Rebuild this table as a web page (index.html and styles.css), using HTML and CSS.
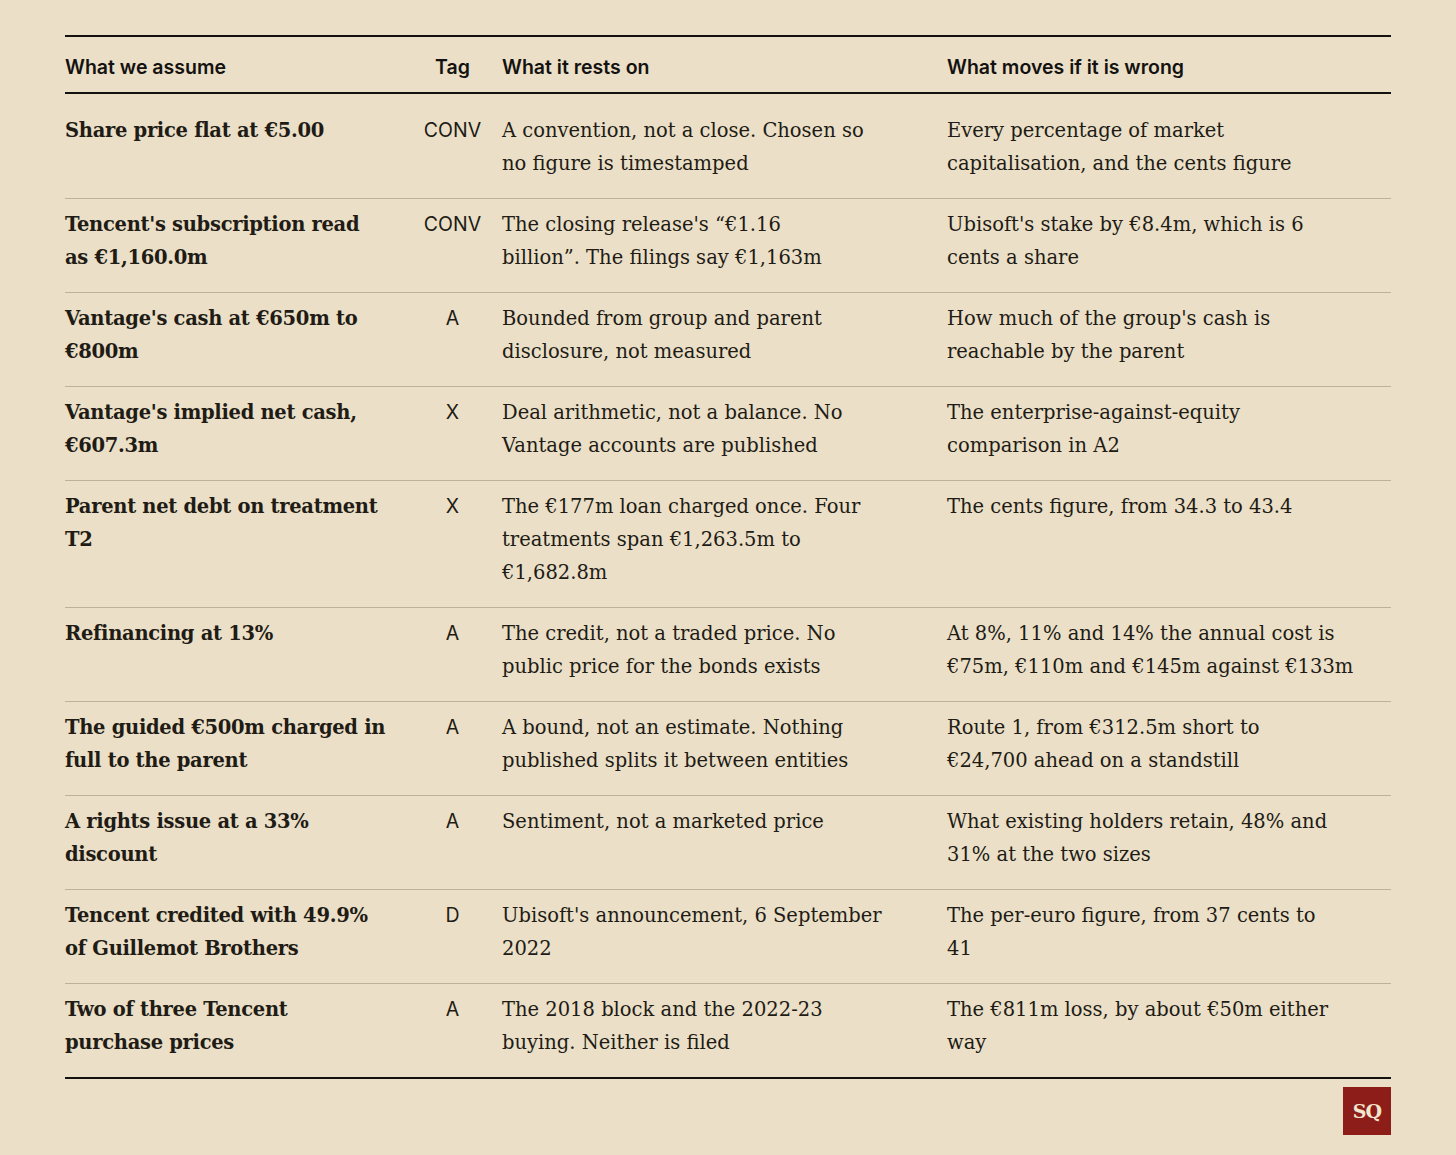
FILE: index.html
```html
<!DOCTYPE html>
<html lang="en">
<head>
<meta charset="utf-8">
<title>Assumptions</title>
<link rel="stylesheet" href="styles.css">
</head>
<body>
<main class="page">
  <table class="assumptions">
    <colgroup>
      <col class="c-assume">
      <col class="c-tag">
      <col class="c-rests">
      <col class="c-moves">
    </colgroup>
    <thead>
      <tr>
        <th class="assume">What we assume</th>
        <th class="tag">Tag</th>
        <th>What it rests on</th>
        <th>What moves if it is wrong</th>
      </tr>
    </thead>
    <tbody>
      <tr>
        <td class="assume">Share price flat at €5.00</td>
        <td class="tag">CONV</td>
        <td>A convention, not a close. Chosen so<br>no figure is timestamped</td>
        <td>Every percentage of market<br>capitalisation, and the cents figure</td>
      </tr>
      <tr>
        <td class="assume">Tencent's subscription read<br>as €1,160.0m</td>
        <td class="tag">CONV</td>
        <td>The closing release's “€1.16<br>billion”. The filings say €1,163m</td>
        <td>Ubisoft's stake by €8.4m, which is 6<br>cents a share</td>
      </tr>
      <tr>
        <td class="assume">Vantage's cash at €650m to<br>€800m</td>
        <td class="tag">A</td>
        <td>Bounded from group and parent<br>disclosure, not measured</td>
        <td>How much of the group's cash is<br>reachable by the parent</td>
      </tr>
      <tr>
        <td class="assume">Vantage's implied net cash,<br>€607.3m</td>
        <td class="tag">X</td>
        <td>Deal arithmetic, not a balance. No<br>Vantage accounts are published</td>
        <td>The enterprise-against-equity<br>comparison in A2</td>
      </tr>
      <tr>
        <td class="assume">Parent net debt on treatment<br>T2</td>
        <td class="tag">X</td>
        <td>The €177m loan charged once. Four<br>treatments span €1,263.5m to<br>€1,682.8m</td>
        <td>The cents figure, from 34.3 to 43.4</td>
      </tr>
      <tr>
        <td class="assume">Refinancing at 13%</td>
        <td class="tag">A</td>
        <td>The credit, not a traded price. No<br>public price for the bonds exists</td>
        <td>At 8%, 11% and 14% the annual cost is<br>€75m, €110m and €145m against €133m</td>
      </tr>
      <tr>
        <td class="assume">The guided €500m charged in<br>full to the parent</td>
        <td class="tag">A</td>
        <td>A bound, not an estimate. Nothing<br>published splits it between entities</td>
        <td>Route 1, from €312.5m short to<br>€24,700 ahead on a standstill</td>
      </tr>
      <tr>
        <td class="assume">A rights issue at a 33%<br>discount</td>
        <td class="tag">A</td>
        <td>Sentiment, not a marketed price</td>
        <td>What existing holders retain, 48% and<br>31% at the two sizes</td>
      </tr>
      <tr>
        <td class="assume">Tencent credited with 49.9%<br>of Guillemot Brothers</td>
        <td class="tag">D</td>
        <td>Ubisoft's announcement, 6 September<br>2022</td>
        <td>The per-euro figure, from 37 cents to<br>41</td>
      </tr>
      <tr>
        <td class="assume">Two of three Tencent<br>purchase prices</td>
        <td class="tag">A</td>
        <td>The 2018 block and the 2022-23<br>buying. Neither is filed</td>
        <td>The €811m loss, by about €50m either<br>way</td>
      </tr>
    </tbody>
  </table>
  <footer class="footer">
    <div class="logo">SQ</div>
  </footer>
</main>
</body>
</html>
```

FILE: styles.css
```css
html, body {
  margin: 0;
  padding: 0;
  background: #ebdfc7;
}

.page {
  padding: 35px 65px 20px;
  color: #211b15;
}

.assumptions {
  width: 1326px;
  border-collapse: collapse;
  table-layout: fixed;
  border-top: 2px solid #141210;
  border-bottom: 2px solid #141210;
}

.c-assume { width: 358px; }
.c-tag { width: 79px; }
.c-rests { width: 445px; }
.c-moves { width: 444px; }

.assumptions th {
  font-family: Inter, "Liberation Sans", sans-serif;
  font-weight: 600;
  font-size: 19.5px;
  text-align: left;
  padding: 16px 20px 11px 0;
  line-height: 28px;
  border-bottom: 2px solid #141210;
  color: #141210;
}

.assumptions td {
  font-family: "DejaVu Serif", serif;
  font-size: 19.5px;
  line-height: 33px;
  vertical-align: top;
  padding: 9px 0 18px 0;
  border-top: 1px solid #bfb29a;
  white-space: nowrap;
}

.assumptions tbody tr:first-child td {
  padding-top: 20px;
  border-top: none;
}

.assumptions td.assume {
  font-weight: 700;
  letter-spacing: -0.3px;
}

.assumptions .tag {
  text-align: center;
  padding-right: 20px;
}

.assumptions td.tag {
  font-family: Inter, "Liberation Sans", sans-serif;
  font-size: 19.5px;
  padding-top: 9px;
}

.assumptions tbody tr:first-child td.tag {
  padding-top: 20px;
}

.footer {
  display: flex;
  justify-content: flex-end;
  width: 1326px;
  padding-top: 8px;
}

.logo {
  width: 48px;
  height: 48px;
  background: #8d1d18;
  color: #f3e6cf;
  font-family: "DejaVu Serif", serif;
  font-weight: 700;
  font-size: 19px;
  display: flex;
  align-items: center;
  justify-content: center;
  letter-spacing: -1px;
}
```
